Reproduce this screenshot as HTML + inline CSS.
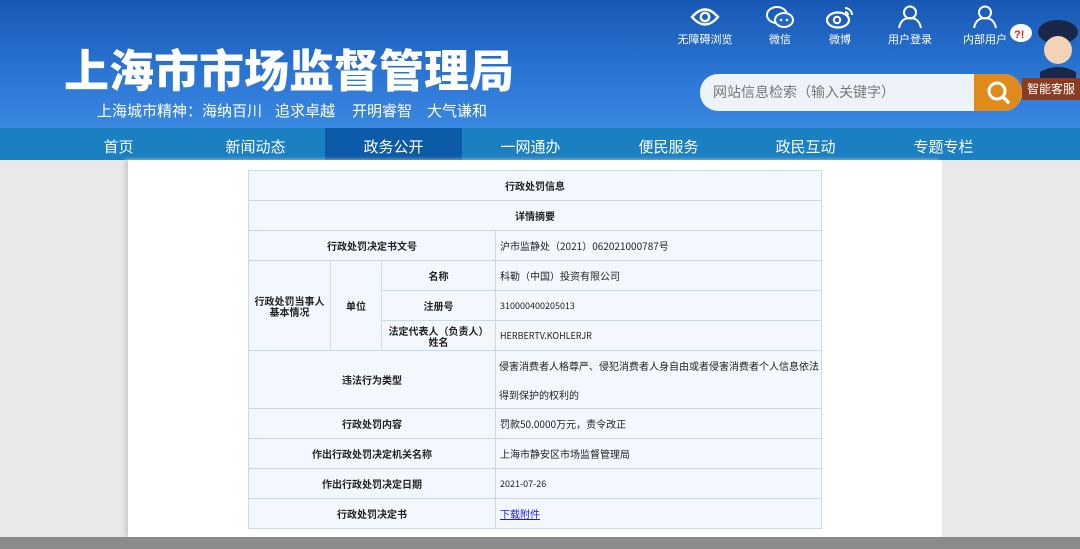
<!DOCTYPE html>
<html><head><meta charset="utf-8"><style>
*{margin:0;padding:0;box-sizing:border-box}
body{width:1080px;height:549px;overflow:hidden;background:#e9e9e9;font-family:"Liberation Sans","Noto Sans CJK SC",sans-serif;position:relative}
.hdr{position:absolute;left:0;top:0;width:1080px;height:128px;background:linear-gradient(180deg,#1858b4 0%,#2a74d2 55%,#3a88e2 100%)}
.title{position:absolute;left:64px;top:40px;color:#fff;font-size:45px;line-height:56px;font-weight:900;font-family:"Noto Sans CJK SC",sans-serif}
.sub{position:absolute;top:100px;color:#fff;font-size:15px;font-family:"Noto Sans CJK SC",sans-serif;white-space:pre}
.ic{position:absolute;top:5px;color:#fff;font-size:11px;text-align:center;font-family:"Noto Sans CJK SC",sans-serif;width:70px}
.ic svg{display:block;margin:0 auto 2px}
.search{position:absolute;left:700px;top:74px;width:322px;height:37px;background:#eef3fa;border-radius:18px;color:#777;font-size:14px;line-height:37px;padding-left:13px;font-family:"Noto Sans CJK SC",sans-serif}
.sbtn{position:absolute;left:974px;top:74px;width:48px;height:37px;background:#e08a1c;border-radius:0 18px 18px 0}
.kf{position:absolute;left:1022px;top:78px;width:58px;height:22px;background:#8a3b22;color:#fff;font-size:12px;line-height:22px;text-align:center;font-family:"Noto Sans CJK SC",sans-serif}
.nav{position:absolute;left:0;top:128px;width:1080px;height:32px;background:#1b80c2}
.nav div{position:absolute;top:0;height:32px;line-height:38px;color:#fff;font-size:15px;text-align:center;width:137px;font-family:"Noto Sans CJK SC",sans-serif}
.main{position:absolute;left:128px;top:160px;width:814px;height:377px;background:#fff;box-shadow:-3px 0 4px #ccc}
.foot{position:absolute;left:0;top:537px;width:1080px;height:12px;background:#8b8b8b}
.c{position:absolute;background:#f3f8fe;border:1px solid #c9dbe9;font-size:10px;color:#222;display:flex;align-items:center;font-family:"Noto Sans CJK SC",sans-serif}
.l{justify-content:center;text-align:center;font-weight:bold;line-height:11px}
.v{padding-left:4px}
a{color:#1a1aee}
</style></head><body>
<div class="hdr">
<div class="title">上海市市场监督管理局</div>
<div class="sub" style="left:97px">上海城市精神：海纳百川</div>
<div class="sub" style="left:275px">追求卓越</div>
<div class="sub" style="left:352px">开明睿智</div>
<div class="sub" style="left:427px">大气谦和</div>
<div class="ic" style="left:670px"><svg width="30" height="24" viewBox="0 0 30 24"><path d="M2 12Q15-3 28 12Q15 27 2 12Z" fill="none" stroke="#fff" stroke-width="2.4"/><circle cx="15" cy="12" r="4.2" fill="none" stroke="#fff" stroke-width="2.4"/></svg>无障碍浏览</div>
<div class="ic" style="left:745px"><svg width="30" height="24" viewBox="0 0 30 24"><ellipse cx="12" cy="10" rx="10" ry="8" fill="none" stroke="#fff" stroke-width="2"/><ellipse cx="19" cy="15" rx="9" ry="7" fill="#2468c4" stroke="#fff" stroke-width="2"/><circle cx="16" cy="15" r="1.3" fill="#fff"/><circle cx="22" cy="15" r="1.3" fill="#fff"/></svg>微信</div>
<div class="ic" style="left:805px"><svg width="30" height="24" viewBox="0 0 30 24"><ellipse cx="13" cy="15" rx="11" ry="7.5" fill="none" stroke="#fff" stroke-width="2.2"/><circle cx="12" cy="15" r="3.2" fill="none" stroke="#fff" stroke-width="2"/><path d="M20 3A7 7 0 0 1 27 10M20 7A3 3 0 0 1 23 10" fill="none" stroke="#fff" stroke-width="2"/></svg>微博</div>
<div class="ic" style="left:875px"><svg width="30" height="24" viewBox="0 0 30 24"><circle cx="15" cy="7.5" r="6" fill="none" stroke="#fff" stroke-width="2"/><path d="M4 23Q6 13 15 13Q24 13 26 23" fill="none" stroke="#fff" stroke-width="2"/></svg>用户登录</div>
<div class="ic" style="left:950px"><svg width="30" height="24" viewBox="0 0 30 24"><circle cx="15" cy="7.5" r="6" fill="none" stroke="#fff" stroke-width="2"/><path d="M4 23Q6 13 15 13Q24 13 26 23" fill="none" stroke="#fff" stroke-width="2"/></svg>内部用户</div>
<svg style="position:absolute;left:1008px;top:14px" width="72" height="66" viewBox="0 0 72 66"><ellipse cx="13" cy="19" rx="11" ry="9" fill="#fff"/><text x="6" y="24" font-size="11" fill="#d22" font-weight="bold" font-family="Liberation Sans">?!</text><ellipse cx="50" cy="18" rx="20" ry="12" fill="#1a2748"/><ellipse cx="50" cy="36" rx="14" ry="14" fill="#f2d3b5"/><path d="M32 58Q50 48 68 58L68 66L32 66Z" fill="#1a2748"/></svg>
<div class="search">网站信息检索（输入关键字）</div>
<div class="sbtn"><svg width="48" height="37" viewBox="0 0 48 37"><circle cx="23" cy="17" r="8" fill="none" stroke="#fff" stroke-width="3"/><path d="M29 23L34 28" stroke="#fff" stroke-width="3.5" stroke-linecap="round"/></svg></div>
<div class="kf">智能客服</div>
</div>
<div class="nav">
<div style="left:50px">首页</div><div style="left:187px">新闻动态</div><div style="left:325px;background:#0c5ba8">政务公开</div><div style="left:462px">一网通办</div><div style="left:600px">便民服务</div><div style="left:737px">政民互动</div><div style="left:875px">专题专栏</div>
</div>
<div class="main"></div>
<div class="c l" style="left:248px;top:170px;width:574px;height:31px">行政处罚信息</div>
<div class="c l" style="left:248px;top:200px;width:574px;height:31px">详情摘要</div>
<div class="c l" style="left:248px;top:230px;width:248px;height:31px">行政处罚决定书文号</div>
<div class="c v" style="left:495px;top:230px;width:327px;height:31px">沪市监静处（2021）062021000787号</div>
<div class="c l" style="left:248px;top:260px;width:83px;height:91px">行政处罚当事人<br>基本情况</div>
<div class="c l" style="left:330px;top:260px;width:52px;height:91px">单位</div>
<div class="c l" style="left:381px;top:260px;width:115px;height:31px">名称</div>
<div class="c v" style="left:495px;top:260px;width:327px;height:31px">科勒（中国）投资有限公司</div>
<div class="c l" style="left:381px;top:290px;width:115px;height:31px">注册号</div>
<div class="c v" style="left:495px;top:290px;width:327px;height:31px;font-size:9px">310000400205013</div>
<div class="c l" style="left:381px;top:320px;width:115px;height:31px">法定代表人（负责人）<br>姓名</div>
<div class="c v" style="left:495px;top:320px;width:327px;height:31px;font-size:9px">HERBERTV.KOHLERJR</div>
<div class="c l" style="left:248px;top:350px;width:248px;height:59px">违法行为类型</div>
<div class="c v" style="left:495px;top:350px;width:327px;height:59px;line-height:29px;padding-left:3px">侵害消费者人格尊严、侵犯消费者人身自由或者侵害消费者个人信息依法得到保护的权利的</div>
<div class="c l" style="left:248px;top:408px;width:248px;height:31px">行政处罚内容</div>
<div class="c v" style="left:495px;top:408px;width:327px;height:31px">罚款50.0000万元，责令改正</div>
<div class="c l" style="left:248px;top:438px;width:248px;height:31px">作出行政处罚决定机关名称</div>
<div class="c v" style="left:495px;top:438px;width:327px;height:31px">上海市静安区市场监督管理局</div>
<div class="c l" style="left:248px;top:468px;width:248px;height:31px">作出行政处罚决定日期</div>
<div class="c v" style="left:495px;top:468px;width:327px;height:31px;font-size:9px">2021-07-26</div>
<div class="c l" style="left:248px;top:498px;width:248px;height:31px">行政处罚决定书</div>
<div class="c v" style="left:495px;top:498px;width:327px;height:31px"><a href="#">下载附件</a></div>
<div class="foot"></div>
</body></html>
